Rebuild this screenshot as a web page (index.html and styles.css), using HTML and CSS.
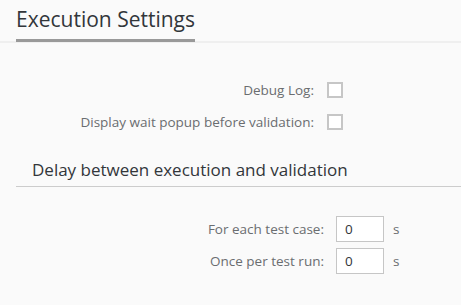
FILE: index.html
```html
<!DOCTYPE html>
<html lang="en">
<head>
    <meta charset="UTF-8">
    <title>Execution Settings</title>
    <link rel="stylesheet" href="styles.css">
</head>
<body>
    <div class="page-header">
        <h1 class="page-title">Execution Settings</h1>
    </div>

    <div class="form">
        <div class="row check-row">
            <label class="label">Debug Log:</label>
            <span class="checkbox"></span>
        </div>
        <div class="row check-row">
            <label class="label">Display wait popup before validation:</label>
            <span class="checkbox"></span>
        </div>
    </div>

    <h2 class="section-title">Delay between execution and validation</h2>

    <div class="form delay-form">
        <div class="row input-row">
            <label class="label">For each test case:</label>
            <input class="num-input" type="text" value="0">
            <span class="unit">s</span>
        </div>
        <div class="row input-row">
            <label class="label">Once per test run:</label>
            <input class="num-input" type="text" value="0">
            <span class="unit">s</span>
        </div>
    </div>
</body>
</html>
```

FILE: styles.css
```css
body {
    margin: 0;
    background-color: #fafafa;
    font-family: "Open Sans", Arial, sans-serif;
    color: #32363a;
}
.page-header {
    border-bottom: 2px solid #efefef;
    padding-left: 16px;
    height: 41px;
}
.page-title {
    display: inline-block;
    margin: 0;
    padding-top: 4px;
    height: 35px;
    font-size: 21px;
    font-weight: normal;
    line-height: 30px;
    border-bottom: 3px solid #999;
    box-sizing: content-box;
}
.form {
    padding-top: 31px;
}
.row {
    display: flex;
    align-items: center;
    height: 32px;
}
.label {
    font-size: 13.5px;
    color: #6a6d70;
    text-align: right;
}
.check-row .label {
    width: 314px;
    margin-right: 13px;
}
.checkbox {
    width: 16px;
    height: 16px;
    box-sizing: border-box;
    border: 2px solid #c6c6c6;
    background-color: white;
}
.section-title {
    margin: 20px 0 0 16px;
    padding: 0 0 4px 16px;
    font-size: 17px;
    font-weight: normal;
    line-height: 24px;
    border-bottom: 1px solid #cccccc;
}
.delay-form {
    padding-top: 26px;
}
.input-row .label {
    width: 324px;
    margin-right: 12px;
}
.num-input {
    width: 48px;
    height: 26px;
    box-sizing: border-box;
    border: 1px solid #c6c6c6;
    background-color: white;
    padding: 0 8px;
    font-family: inherit;
    font-size: 13.5px;
    color: #32363a;
    outline: none;
}
.unit {
    margin-left: 9px;
    font-size: 13.5px;
    color: #6a6d70;
}
```
